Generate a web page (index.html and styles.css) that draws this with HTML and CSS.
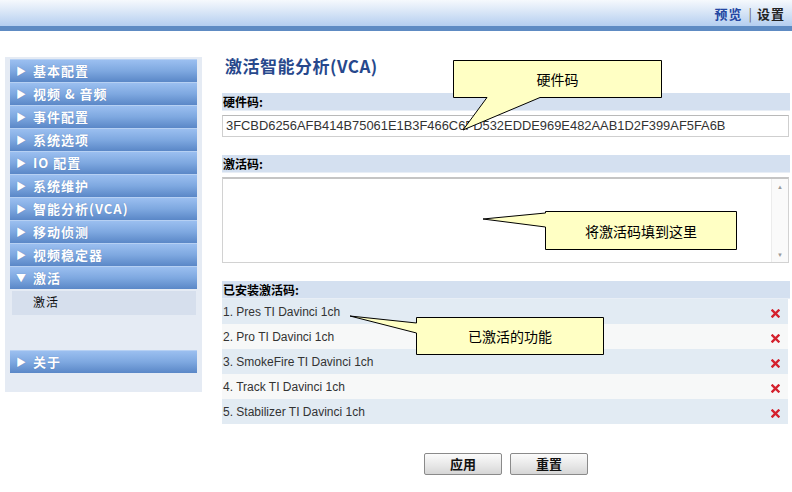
FILE: index.html
```html
<!DOCTYPE html>
<html lang="zh">
<head>
<meta charset="utf-8">
<title>激活智能分析(VCA)</title>
<link rel="stylesheet" href="styles.css">
</head>
<body>
<header class="topbar">
  <div class="toplinks">
    <a class="link-preview">预览</a><span class="sep">|</span><a class="link-settings">设置</a>
  </div>
</header>
<div class="layout">
  <nav class="sidebar">
    <div class="menu-item"><span class="arrow">▶</span>基本配置</div>
    <div class="menu-item"><span class="arrow">▶</span>视频 &amp; 音频</div>
    <div class="menu-item"><span class="arrow">▶</span>事件配置</div>
    <div class="menu-item"><span class="arrow">▶</span>系统选项</div>
    <div class="menu-item"><span class="arrow">▶</span>IO 配置</div>
    <div class="menu-item"><span class="arrow">▶</span>系统维护</div>
    <div class="menu-item"><span class="arrow">▶</span>智能分析(VCA)</div>
    <div class="menu-item"><span class="arrow">▶</span>移动侦测</div>
    <div class="menu-item"><span class="arrow">▶</span>视频稳定器</div>
    <div class="menu-item"><span class="arrow">▼</span>激活</div>
    <div class="sub-item">激活</div>
    <div class="menu-item about"><span class="arrow">▶</span>关于</div>
  </nav>
  <main class="content">
    <h1 class="title">激活智能分析(VCA)</h1>
    <div class="label-bar">硬件码:</div>
    <div class="code-input">3FCBD6256AFB414B75061E1B3F466C6FD532EDDE969E482AAB1D2F399AF5FA6B</div>
    <div class="label-bar gap">激活码:</div>
    <div class="code-area">
      <div class="area-body"></div>
      <div class="scroll">
        <span class="sarrow">▲</span>
        <span class="sarrow">▼</span>
      </div>
    </div>
    <div class="label-bar gap3">已安装激活码:</div>
    <div class="rows">
      <div class="row odd"><span>1. Pres TI Davinci 1ch</span><svg class="del" width="9" height="9" viewBox="0 0 9 9"><path d="M1.5 1.5 L7.5 7.5 M7.5 1.5 L1.5 7.5" stroke="#d4212d" stroke-width="2.4" stroke-linecap="square"/></svg></div>
      <div class="row even"><span>2. Pro TI Davinci 1ch</span><svg class="del" width="9" height="9" viewBox="0 0 9 9"><path d="M1.5 1.5 L7.5 7.5 M7.5 1.5 L1.5 7.5" stroke="#d4212d" stroke-width="2.4" stroke-linecap="square"/></svg></div>
      <div class="row odd"><span>3. SmokeFire TI Davinci 1ch</span><svg class="del" width="9" height="9" viewBox="0 0 9 9"><path d="M1.5 1.5 L7.5 7.5 M7.5 1.5 L1.5 7.5" stroke="#d4212d" stroke-width="2.4" stroke-linecap="square"/></svg></div>
      <div class="row even"><span>4. Track TI Davinci 1ch</span><svg class="del" width="9" height="9" viewBox="0 0 9 9"><path d="M1.5 1.5 L7.5 7.5 M7.5 1.5 L1.5 7.5" stroke="#d4212d" stroke-width="2.4" stroke-linecap="square"/></svg></div>
      <div class="row odd"><span>5. Stabilizer TI Davinci 1ch</span><svg class="del" width="9" height="9" viewBox="0 0 9 9"><path d="M1.5 1.5 L7.5 7.5 M7.5 1.5 L1.5 7.5" stroke="#d4212d" stroke-width="2.4" stroke-linecap="square"/></svg></div>
    </div>
    <div class="buttons">
      <button class="btn">应用</button>
      <button class="btn">重置</button>
    </div>
  </main>
</div>

<div class="callout c1">
  <svg class="shape" width="209" height="38" viewBox="0 0 209 38"><path d="M0.5 0.5 H208.5 V37.5 H87 L10 70 L34 37.5 H0.5 Z" fill="#ffffc4" stroke="#000" stroke-width="1"/></svg>
  <span class="ctext">硬件码</span>
</div>
<div class="callout c2">
  <svg class="shape" width="192" height="39" viewBox="0 0 192 39"><path d="M0.5 0.5 H191.5 V38.5 H0.5 V16 L-62 8 L0.5 2 Z" fill="#ffffc4" stroke="#000" stroke-width="1"/></svg>
  <span class="ctext">将激活码填到这里</span>
</div>
<div class="callout c3">
  <svg class="shape" width="188" height="38" viewBox="0 0 188 38"><path d="M0.5 0.5 H187.5 V37.5 H0.5 V16 L-66 -1 L0.5 6 Z" fill="#ffffc4" stroke="#000" stroke-width="1"/></svg>
  <span class="ctext">已激活的功能</span>
</div>
</body>
</html>
```
FILE: styles.css
```css
html, body {
  margin: 0;
  padding: 0;
  background: #ffffff;
}
body {
  position: relative;
  width: 792px;
  height: 492px;
  overflow: hidden;
  font-family: "Liberation Sans", "Noto Sans CJK SC", sans-serif;
  font-size: 12px;
  color: #333;
}
.topbar {
  height: 26px;
  border-bottom: 5px solid #5e8bc3;
  background: linear-gradient(#f6f9fd, #d9e6f7 45%, #b4cef0);
  display: flex;
  justify-content: flex-end;
  align-items: center;
}
.toplinks {
  padding-right: 7px;
  padding-top: 1px;
  font-family: "Noto Sans CJK SC", sans-serif;
  font-size: 13px;
  font-weight: bold;
  display: flex;
  align-items: center;
}
.link-preview { color: #2447a3; letter-spacing: 1px; }
.sep { color: #666; font-weight: normal; margin: 0 5px 0 6px; }
.link-settings { color: #222; letter-spacing: 1px; }

.layout {
  display: flex;
  align-items: flex-start;
  padding-top: 26px;
}
.sidebar {
  margin-left: 5px;
  width: 187px;
  height: 333px;
  padding: 2px 5px 0 5px;
  background: #e5ebf4;
  display: flex;
  flex-direction: column;
}
.menu-item {
  height: 22px;
  border-top: 1px solid #b6d0f3;
  background: linear-gradient(#9bbff0, #7ea8e0 50%, #5a87c7);
  color: #fff;
  font-family: "Noto Sans CJK SC", sans-serif;
  font-weight: bold;
  font-size: 13px;
  letter-spacing: 1px;
  line-height: 20px;
  display: flex;
  align-items: center;
  text-shadow: 0 0 1px rgba(40,70,130,0.4);
}
.arrow {
  width: 23px;
  padding-left: 6px;
  box-sizing: border-box;
  font-size: 10px;
  letter-spacing: 0;
}
.sub-item {
  margin: 2px 1px 0 2px;
  height: 24px;
  background: #d6dfed;
  color: #111;
  font-family: "Noto Sans CJK SC", sans-serif;
  font-size: 12px;
  letter-spacing: 1px;
  line-height: 22px;
  padding-left: 21px;
}
.menu-item.about {
  margin-top: 35px;
}

.content {
  margin-left: 20px;
  width: 568px;
  display: flex;
  flex-direction: column;
}
.title {
  margin: 0 0 16px 3px;
  height: 20px;
  line-height: 18px;
  font-family: "Noto Sans CJK SC", sans-serif;
  font-size: 17px;
  letter-spacing: 0.5px;
  font-weight: bold;
  color: #27488c;
}
.label-bar {
  height: 18px;
  line-height: 18px;
  background: #d4e0f0;
  border-bottom: 1px solid #e8eef6;
  box-sizing: border-box;
  color: #000;
  font-family: "Noto Sans CJK SC", sans-serif;
  font-size: 12px;
  font-weight: bold;
  padding-left: 1px;
}
.label-bar.gap { margin-top: 18px; }
.label-bar.gap3 { margin-top: 18px; }
.code-input {
  margin-top: 4px;
  width: 567px;
  height: 22px;
  box-sizing: border-box;
  border: 1px solid #cfcfcf;
  border-top-color: #b9b9b9;
  background: #fff;
  color: #333;
  font-size: 12.9px;
  line-height: 20px;
  padding-left: 3px;
  white-space: nowrap;
  overflow: hidden;
}
.code-area {
  margin-top: 4px;
  width: 567px;
  height: 86px;
  box-sizing: border-box;
  border: 1px solid #d2d2d2;
  border-top: 2px solid #c5c5c5;
  background: #fff;
  display: flex;
}
.area-body { flex: 1; }
.scroll {
  width: 16px;
  border-left: 1px solid #ececec;
  background: #fafafa;
  display: flex;
  flex-direction: column;
  justify-content: space-between;
  align-items: center;
  padding: 4px 0 3px;
}
.sarrow {
  font-size: 6px;
  color: #9a9a9a;
  line-height: 8px;
}
.rows {
  width: 566px;
  display: flex;
  flex-direction: column;
}
.row {
  height: 25px;
  display: flex;
  align-items: center;
  justify-content: space-between;
  padding: 1px 8px 0 1px;
  box-sizing: border-box;
  color: #333;
  font-size: 12px;
}
.row.odd { background: #e2ebf3; }
.row.even { background: #f7f8f8; }
.del { margin-top: 3px; }
.buttons {
  margin-top: 29px;
  display: flex;
  justify-content: center;
  gap: 8px;
}
.btn {
  width: 78px;
  height: 22px;
  margin: 0;
  padding: 0;
  border: 1px solid #8a8a8a;
  border-radius: 2px;
  background: linear-gradient(#fbfbfb, #e6e6e6 60%, #d6d6d6);
  font-family: "Noto Sans CJK SC", sans-serif;
  font-size: 13px;
  font-weight: bold;
  color: #111;
  line-height: 20px;
}

.callout {
  position: absolute;
  display: flex;
  align-items: center;
  justify-content: center;
}
.callout .shape {
  position: absolute;
  left: 0;
  top: 0;
  overflow: visible;
}
.ctext {
  position: relative;
  font-family: "Noto Sans CJK SC", sans-serif;
  font-size: 14px;
  color: #000;
}
.c1 { left: 453px; top: 60px; width: 209px; height: 38px; }
.c2 { left: 545px; top: 211px; width: 192px; height: 39px; }
.c3 { left: 416px; top: 317px; width: 188px; height: 38px; }
```
